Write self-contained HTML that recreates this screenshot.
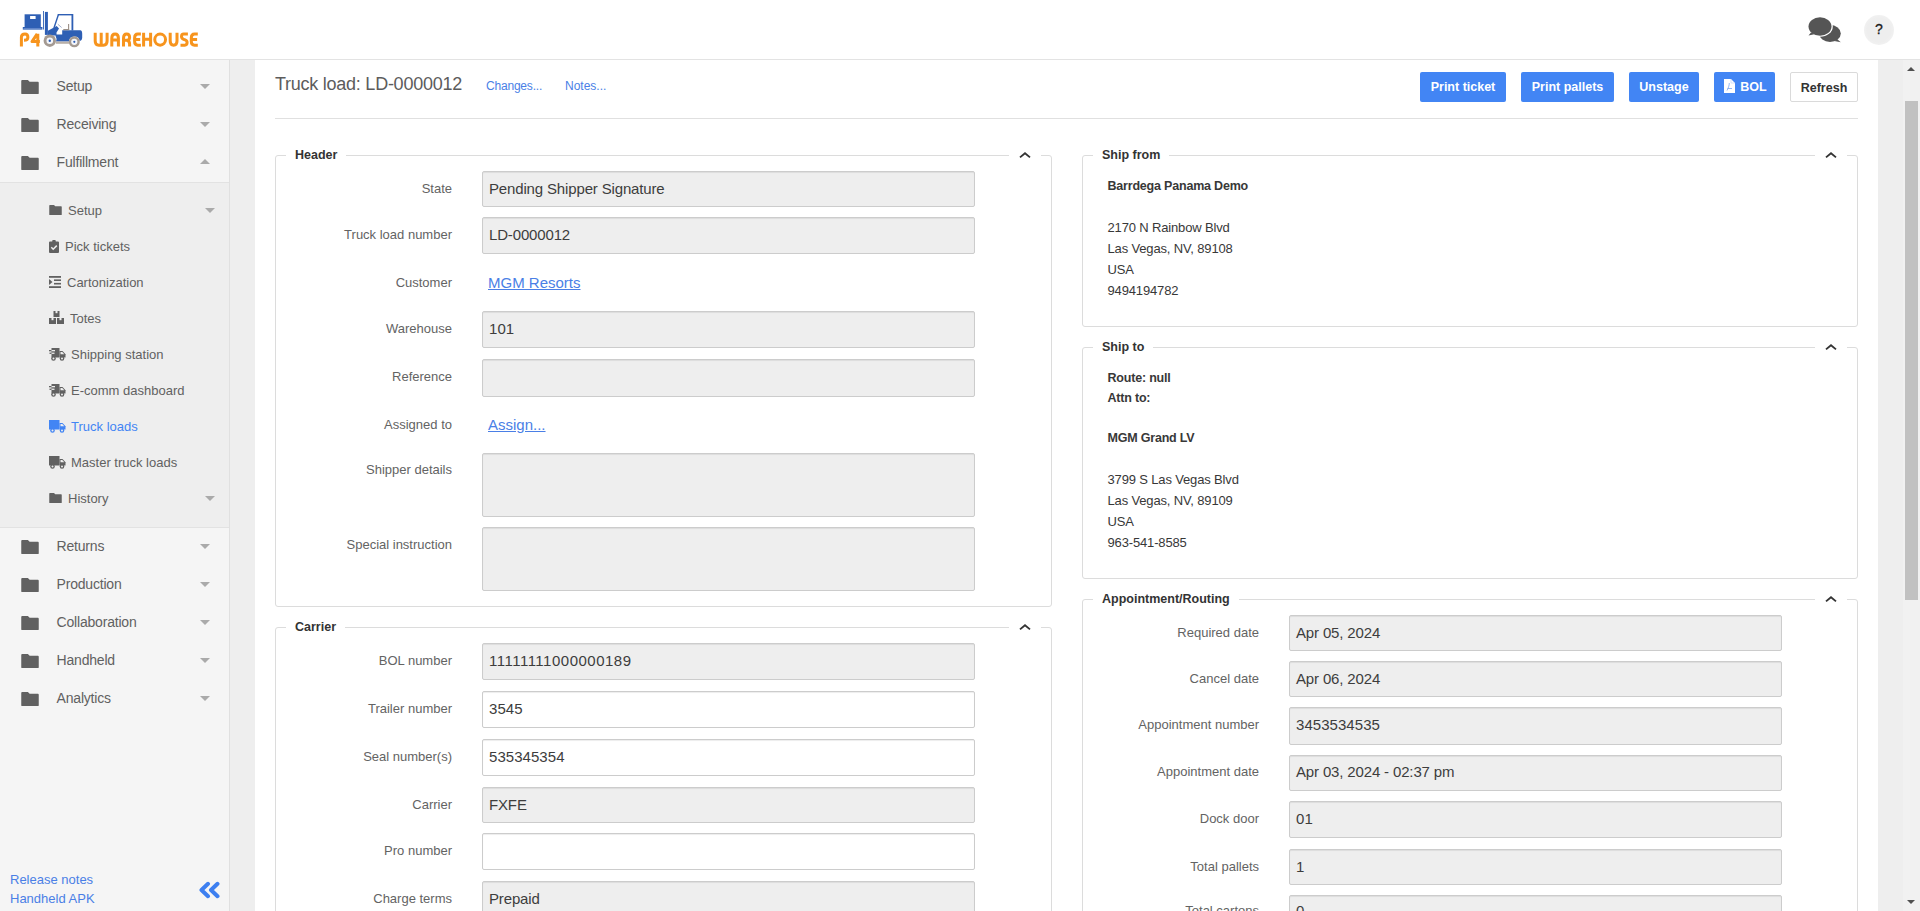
<!DOCTYPE html>
<html><head><meta charset="utf-8">
<style>
*{box-sizing:border-box;margin:0;padding:0}
html,body{width:1920px;height:911px;overflow:hidden;background:#fff;font-family:"Liberation Sans",sans-serif;color:#333}
.abs{position:absolute}
#hdr{position:absolute;left:0;top:0;width:1920px;height:60px;background:#fff;border-bottom:1px solid #e3e3e3}
#side{position:absolute;left:0;top:60px;width:230px;height:851px;background:#f5f5f5;border-right:1px solid #e0e0e0}
#gut{position:absolute;left:230px;top:60px;width:25px;height:851px;background:#eeeeee}
#main{position:absolute;left:255px;top:60px;width:1623px;height:851px;background:#fff}
#gutr{position:absolute;left:1878px;top:60px;width:25px;height:851px;background:#eeeeee}
#sb{position:absolute;left:1903px;top:60px;width:17px;height:851px;background:#f1f1f1}
.mi{position:absolute;left:0;width:229px;height:38px;font-size:14px;color:#616161}
.mi .fo{position:absolute;left:20px;top:0}
.mi .t{position:absolute;left:57px;top:0;line-height:38px}
.caret{position:absolute;width:0;height:0;border-left:5px solid transparent;border-right:5px solid transparent}
.caret.dn{border-top:5px solid #aaa}
.caret.up{border-bottom:5px solid #aaa}
#sub{position:absolute;left:0;top:182px;width:229px;height:346px;background:#eeeeee;border-top:1px solid #e2e2e2;border-bottom:1px solid #e2e2e2}
.si{position:absolute;left:49px;height:20px;font-size:13px;color:#616161;line-height:20px}
.si svg{position:absolute;left:0}
.si .t{position:absolute;white-space:nowrap}
.lnk{color:#4a7fe6}
.btn{position:absolute;top:72px;height:30px;border-radius:2px;background:#4285f4;color:#fff;font-weight:bold;font-size:12.5px;line-height:30px;text-align:center;white-space:nowrap}
.fs{position:absolute;border:1px solid #dcdcdc;border-radius:3px}
.lg{position:absolute;background:#fff;font-weight:bold;font-size:12.5px;color:#333;padding:0 9px;line-height:16px}
.chev{position:absolute;background:#fff;width:32px;height:16px}
.lbl{position:absolute;font-size:13px;color:#636363;text-align:right;white-space:nowrap;line-height:16px}
.inp{position:absolute;background:#eeeeee;border:1px solid #cccccc;border-radius:2px;box-shadow:inset 0 1px 1px rgba(0,0,0,.075)}
.itx{position:absolute;font-size:15px;line-height:17px;color:#3d3d3d;letter-spacing:-0.15px;white-space:nowrap}
.inp.w{background:#fff}
.addr{position:absolute;font-size:13px;color:#383838;line-height:21px;letter-spacing:-0.15px;white-space:nowrap}
.addr.b{font-weight:bold;font-size:12.5px;letter-spacing:-0.2px}
</style></head><body>
<div id="hdr"></div>
<svg class="abs" style="left:0;top:0" width="210" height="58" viewBox="0 0 210 58">
<g fill="#2e5fb4">
<rect x="24.6" y="14.3" width="16.2" height="13"/>
<rect x="22.8" y="27" width="19.6" height="2.6"/>
<rect x="43" y="11" width="0.9" height="18.5"/>
<rect x="44.9" y="11.9" width="3" height="23"/>
<rect x="57.8" y="14" width="15.2" height="1.4"/>
<path d="M57.8 14.2L59.2 14.6L54.6 28.2L53.3 27.8z"/>
<rect x="71.5" y="14" width="1.8" height="16.5"/>
<path d="M47.9 30.8L56.7 25.9L59 28.6L56.5 32.5V35.5H47.9z"/>
<path d="M55.6 34.6H62.2V30.2H80.3Q82 30.2 82.2 33.5V38Q82 40.6 80 41H79.7A5.4 5.4 0 0 0 69 41.5H56A6.2 6.2 0 0 0 55.6 36z"/>
</g>
<rect x="30.1" y="16" width="5.5" height="3" fill="#fff"/>
<rect x="23.5" y="28" width="18" height="0.8" fill="#6d8fd0"/>
<path d="M57.8 24.2L61.6 27.5" stroke="#8a9bbf" stroke-width="0.8"/>
<path d="M68.6 24v6M63.3 29.6h6" stroke="#9a8f86" stroke-width="1.1"/>
<g>
<circle cx="49.8" cy="40.7" r="6.2" fill="#a49a92"/><circle cx="49.8" cy="40.7" r="3.3" fill="#f4f6fb"/><circle cx="49.8" cy="40.7" r="1.2" fill="#2e5fb4"/>
<circle cx="74.3" cy="41.8" r="5.5" fill="#a49a92"/><circle cx="74.3" cy="41.8" r="3.1" fill="#f4f6fb"/><circle cx="74.3" cy="41.8" r="1.1" fill="#2e5fb4"/>
<rect x="56" y="41.6" width="13" height="2.2" fill="#b9b0a8"/>
</g>
<g fill="none" stroke="#f7941d" stroke-width="3" stroke-linejoin="round">
<path d="M21.4 46.6V37.3Q21.4 34 25 34Q27.9 34 27.9 37.3Q27.9 40.3 24 40.3"/>
<path d="M37.2 33.8L32 41.6H39.9M37.8 33.8V46.6"/>
<path d="M95.2 32.7V41Q95.2 45.2 98.8 45.2H103.5Q107.1 45.2 107.1 41V32.7M101.2 32.7V44"/>
<path d="M111.8 46.6V38.2Q111.8 34 115.1 34Q118.4 34 118.4 38.2V46.6M111.8 40H118.4"/>
<path d="M123.5 46.6V38.2Q123.5 34 126.6 34Q129.6 34 129.6 37.2Q129.6 40.2 126.8 40.2H123.5M127 40.2Q129.6 41 129.6 44V46.6"/>
<path d="M140.9 34H137.8Q134.6 34 134.6 38V41.3Q134.6 45.2 137.8 45.2H140.9M134.6 39.6H140.2"/>
<path d="M143.6 32.7V46.6M150.6 32.7V46.6M143.6 39.2H150.6"/>
<ellipse cx="160.15" cy="39.6" rx="5.4" ry="5.55"/>
<path d="M170.2 32.7V41Q170.2 45.2 173.6 45.2Q177 45.2 177 41V32.7"/>
<path d="M187.9 34H183.7Q181.5 34 181.5 36.6Q181.5 38.5 183.6 39.3L185.2 39.9Q187.1 40.6 187.1 42.6Q187.1 45.2 184.8 45.2H180.5"/>
<path d="M197.8 34H194.5Q191.3 34 191.3 38V41.3Q191.3 45.2 194.5 45.2H197.8M191.3 39.6H197.1"/>
</g>
</svg>
<svg class="abs" style="left:1806px;top:15px" width="36" height="29" viewBox="0 0 36 29">
<ellipse cx="24" cy="18.5" rx="10.8" ry="8.5" fill="#555"/>
<path d="M31 24l3.8 3.2-6.5-1.2z" fill="#555"/>
<ellipse cx="14" cy="11.5" rx="12.8" ry="10.3" fill="#fff"/>
<ellipse cx="14" cy="11.5" rx="11.5" ry="9.3" fill="#555"/>
<path d="M5 17.5L2.5 20.5l7-1.5z" fill="#555"/>
</svg>
<div class="abs" style="left:1864px;top:15px;width:30px;height:30px;border-radius:50%;background:radial-gradient(circle,#eeeeee 55%,#f3f3f3 80%,#fbfbfb 100%);font-size:14px;color:#1a1a1a;text-align:center;line-height:28px;-webkit-text-stroke:0.3px #1a1a1a">?</div>
<div id="side"></div>
<div id="sub"></div>
<svg class="abs" style="left:20px;top:80px" width="20" height="14" viewBox="0 0 20 16"><path d="M7.6 0H1C.4 0 0 .4 0 1v14c0 .6.4 1 1 1h18c.6 0 1-.4 1-1V3c0-.6-.4-1-1-1h-9.4z" fill="#616161"/></svg>
<div class="abs" style="left:56.6px;top:77px;font-size:14px;line-height:18px;color:#616161;letter-spacing:-0.2px">Setup</div>
<div class="caret dn" style="left:200px;top:84px"></div>
<svg class="abs" style="left:20px;top:118px" width="20" height="14" viewBox="0 0 20 16"><path d="M7.6 0H1C.4 0 0 .4 0 1v14c0 .6.4 1 1 1h18c.6 0 1-.4 1-1V3c0-.6-.4-1-1-1h-9.4z" fill="#616161"/></svg>
<div class="abs" style="left:56.6px;top:115px;font-size:14px;line-height:18px;color:#616161;letter-spacing:-0.2px">Receiving</div>
<div class="caret dn" style="left:200px;top:122px"></div>
<svg class="abs" style="left:20px;top:156px" width="20" height="14" viewBox="0 0 20 16"><path d="M7.6 0H1C.4 0 0 .4 0 1v14c0 .6.4 1 1 1h18c.6 0 1-.4 1-1V3c0-.6-.4-1-1-1h-9.4z" fill="#616161"/></svg>
<div class="abs" style="left:56.6px;top:153px;font-size:14px;line-height:18px;color:#616161;letter-spacing:-0.2px">Fulfillment</div>
<div class="caret up" style="left:200px;top:159px"></div>
<svg class="abs" style="left:20px;top:540px" width="20" height="14" viewBox="0 0 20 16"><path d="M7.6 0H1C.4 0 0 .4 0 1v14c0 .6.4 1 1 1h18c.6 0 1-.4 1-1V3c0-.6-.4-1-1-1h-9.4z" fill="#616161"/></svg>
<div class="abs" style="left:56.6px;top:537px;font-size:14px;line-height:18px;color:#616161;letter-spacing:-0.2px">Returns</div>
<div class="caret dn" style="left:200px;top:544px"></div>
<svg class="abs" style="left:20px;top:578px" width="20" height="14" viewBox="0 0 20 16"><path d="M7.6 0H1C.4 0 0 .4 0 1v14c0 .6.4 1 1 1h18c.6 0 1-.4 1-1V3c0-.6-.4-1-1-1h-9.4z" fill="#616161"/></svg>
<div class="abs" style="left:56.6px;top:575px;font-size:14px;line-height:18px;color:#616161;letter-spacing:-0.2px">Production</div>
<div class="caret dn" style="left:200px;top:582px"></div>
<svg class="abs" style="left:20px;top:616px" width="20" height="14" viewBox="0 0 20 16"><path d="M7.6 0H1C.4 0 0 .4 0 1v14c0 .6.4 1 1 1h18c.6 0 1-.4 1-1V3c0-.6-.4-1-1-1h-9.4z" fill="#616161"/></svg>
<div class="abs" style="left:56.6px;top:613px;font-size:14px;line-height:18px;color:#616161;letter-spacing:-0.2px">Collaboration</div>
<div class="caret dn" style="left:200px;top:620px"></div>
<svg class="abs" style="left:20px;top:654px" width="20" height="14" viewBox="0 0 20 16"><path d="M7.6 0H1C.4 0 0 .4 0 1v14c0 .6.4 1 1 1h18c.6 0 1-.4 1-1V3c0-.6-.4-1-1-1h-9.4z" fill="#616161"/></svg>
<div class="abs" style="left:56.6px;top:651px;font-size:14px;line-height:18px;color:#616161;letter-spacing:-0.2px">Handheld</div>
<div class="caret dn" style="left:200px;top:658px"></div>
<svg class="abs" style="left:20px;top:692px" width="20" height="14" viewBox="0 0 20 16"><path d="M7.6 0H1C.4 0 0 .4 0 1v14c0 .6.4 1 1 1h18c.6 0 1-.4 1-1V3c0-.6-.4-1-1-1h-9.4z" fill="#616161"/></svg>
<div class="abs" style="left:56.6px;top:689px;font-size:14px;line-height:18px;color:#616161;letter-spacing:-0.2px">Analytics</div>
<div class="caret dn" style="left:200px;top:696px"></div>
<svg class="abs" style="left:49px;top:205px" width="13" height="10" viewBox="0 0 20 16"><path d="M7.6 0H1C.4 0 0 .4 0 1v14c0 .6.4 1 1 1h18c.6 0 1-.4 1-1V3c0-.6-.4-1-1-1h-9.4z" fill="#616161"/></svg>
<div class="abs" style="left:68px;top:203px;font-size:13px;line-height:16px;color:#616161;white-space:nowrap">Setup</div>
<div class="caret dn" style="left:205px;top:208px"></div>
<svg class="abs" style="left:49px;top:240px" width="10" height="13" viewBox="0 0 10 13"><path d="M1 1.5h2.2a1.8 1.8 0 0 1 3.6 0H9a1 1 0 0 1 1 1V12a1 1 0 0 1-1 1H1a1 1 0 0 1-1-1V2.5a1 1 0 0 1 1-1z" fill="#616161"/><path d="M2.3 7.3l1.9 1.9 3.6-3.6" stroke="#eee" stroke-width="1.5" fill="none"/></svg>
<div class="abs" style="left:65px;top:239px;font-size:13px;line-height:16px;color:#616161;white-space:nowrap">Pick tickets</div>
<svg class="abs" style="left:49px;top:276px" width="12" height="12" viewBox="0 0 12 12"><g fill="#616161"><rect x="0" y="0" width="12" height="1.8"/><rect x="0" y="10.2" width="12" height="1.8"/><rect x="5" y="3.4" width="7" height="1.6"/><rect x="5" y="6.9" width="7" height="1.6"/><path d="M0 3l3.5 3L0 9z"/></g></svg>
<div class="abs" style="left:67px;top:275px;font-size:13px;line-height:16px;color:#616161;white-space:nowrap">Cartonization</div>
<svg class="abs" style="left:49px;top:311px" width="15" height="13" viewBox="0 0 15 13"><g fill="#616161"><rect x="4.5" y="0" width="6" height="6"/><rect x="0" y="7" width="7" height="6"/><rect x="8" y="7" width="7" height="6"/></g><g fill="#eee"><rect x="6.5" y="0" width="2" height="2.2"/><rect x="2.5" y="7" width="2" height="2.2"/><rect x="10.5" y="7" width="2" height="2.2"/></g></svg>
<div class="abs" style="left:70px;top:311px;font-size:13px;line-height:16px;color:#616161;white-space:nowrap">Totes</div>
<svg class="abs" style="left:49px;top:348px" width="17" height="13" viewBox="0 0 17 13"><g fill="#616161"><path d="M2.5 0h8v9.5h-8z"/><path d="M10.5 3h3l3 3.2v3.3h-6z"/><circle cx="4.5" cy="10.5" r="2.3"/><circle cx="13" cy="10.5" r="2.3"/><rect x="0" y="2" width="3" height="1.3"/><rect x="0.5" y="4.6" width="2.5" height="1.3"/></g><g fill="#eee"><circle cx="4.5" cy="10.5" r="1"/><circle cx="13" cy="10.5" r="1"/><rect x="2.5" y="2" width="3.5" height="1.3"/><rect x="2.5" y="4.6" width="3" height="1.3"/><path d="M11.5 4h1.8l2 2.2h-3.8z"/></g></svg>
<div class="abs" style="left:71px;top:347px;font-size:13px;line-height:16px;color:#616161;white-space:nowrap">Shipping station</div>
<svg class="abs" style="left:49px;top:384px" width="17" height="13" viewBox="0 0 17 13"><g fill="#616161"><path d="M2.5 0h8v9.5h-8z"/><path d="M10.5 3h3l3 3.2v3.3h-6z"/><circle cx="4.5" cy="10.5" r="2.3"/><circle cx="13" cy="10.5" r="2.3"/><rect x="0" y="2" width="3" height="1.3"/><rect x="0.5" y="4.6" width="2.5" height="1.3"/></g><g fill="#eee"><circle cx="4.5" cy="10.5" r="1"/><circle cx="13" cy="10.5" r="1"/><rect x="2.5" y="2" width="3.5" height="1.3"/><rect x="2.5" y="4.6" width="3" height="1.3"/><path d="M11.5 4h1.8l2 2.2h-3.8z"/></g></svg>
<div class="abs" style="left:71px;top:383px;font-size:13px;line-height:16px;color:#616161;white-space:nowrap">E-comm dashboard</div>
<svg class="abs" style="left:49px;top:420px" width="17" height="13" viewBox="0 0 17 13"><g fill="#4285f4"><path d="M0 0h10.5v9.5H0z"/><path d="M10.5 3h3l3 3.2v3.3h-6z"/><circle cx="3.5" cy="10.5" r="2.3"/><circle cx="13" cy="10.5" r="2.3"/></g><g fill="#eee"><circle cx="3.5" cy="10.5" r="1"/><circle cx="13" cy="10.5" r="1"/><path d="M11.5 4h1.8l2 2.2h-3.8z"/></g></svg>
<div class="abs" style="left:71px;top:419px;font-size:13px;line-height:16px;color:#4285f4;white-space:nowrap">Truck loads</div>
<svg class="abs" style="left:49px;top:456px" width="17" height="13" viewBox="0 0 17 13"><g fill="#616161"><path d="M0 0h10.5v9.5H0z"/><path d="M10.5 3h3l3 3.2v3.3h-6z"/><circle cx="3.5" cy="10.5" r="2.3"/><circle cx="13" cy="10.5" r="2.3"/></g><g fill="#eee"><circle cx="3.5" cy="10.5" r="1"/><circle cx="13" cy="10.5" r="1"/><path d="M11.5 4h1.8l2 2.2h-3.8z"/></g></svg>
<div class="abs" style="left:71px;top:455px;font-size:13px;line-height:16px;color:#616161;white-space:nowrap">Master truck loads</div>
<svg class="abs" style="left:49px;top:493px" width="13" height="10" viewBox="0 0 20 16"><path d="M7.6 0H1C.4 0 0 .4 0 1v14c0 .6.4 1 1 1h18c.6 0 1-.4 1-1V3c0-.6-.4-1-1-1h-9.4z" fill="#616161"/></svg>
<div class="abs" style="left:68px;top:491px;font-size:13px;line-height:16px;color:#616161;white-space:nowrap">History</div>
<div class="caret dn" style="left:205px;top:496px"></div>
<div class="abs lnk" style="left:10px;top:872px;font-size:13px;line-height:16px">Release notes</div>
<div class="abs lnk" style="left:10px;top:891px;font-size:13px;line-height:16px">Handheld APK</div>
<svg class="abs" style="left:198px;top:881px" width="23" height="18" viewBox="0 0 23 18"><path d="M10 2.8L3.5 9L10 15.2M19.5 2.8L13 9L19.5 15.2" stroke="#3d7ff0" stroke-width="4" stroke-linecap="round" stroke-linejoin="round" fill="none"/></svg>
<div id="gut"></div><div id="main"></div><div id="gutr"></div>
<div id="sb"></div>
<div class="abs" style="left:1907px;top:67px;width:0;height:0;border-left:4px solid transparent;border-right:4px solid transparent;border-bottom:4px solid #505050"></div>
<div class="abs" style="left:1905px;top:101px;width:13px;height:499px;background:#c1c1c1"></div>
<div class="abs" style="left:1907px;top:900px;width:0;height:0;border-left:4px solid transparent;border-right:4px solid transparent;border-top:4px solid #505050"></div>
<div class="abs" style="left:275px;top:74px;font-size:18px;line-height:21px;color:#5c5c5c;letter-spacing:-0.25px;white-space:nowrap">Truck load: LD-0000012</div>
<div class="abs lnk" style="left:486px;top:79px;font-size:12px;line-height:14px;letter-spacing:-0.2px">Changes...</div>
<div class="abs lnk" style="left:565px;top:79px;font-size:12px;line-height:14px">Notes...</div>
<div class="btn" style="left:1420px;width:86px">Print ticket</div>
<div class="btn" style="left:1521px;width:93px">Print pallets</div>
<div class="btn" style="left:1629px;width:70px">Unstage</div>
<div class="btn" style="left:1714px;width:61px"><svg style="vertical-align:-2px;margin-right:5px;position:relative;top:0px;margin-left:2px" width="11" height="14" viewBox="0 0 11 14"><path d="M0 0h7L11 4V14H0z" fill="#fff"/><path d="M7 0V4H11" fill="none" stroke="#b8cff7" stroke-width=".6"/><path d="M3 11.5c1.2-2.2 2.3-5 2.3-7.5M3.5 9.5h4.5" stroke="#7aa5f0" stroke-width=".8" fill="none"/></svg>BOL</div>
<div class="btn" style="left:1790px;width:68px;background:#fff;color:#333;border:1px solid #dadada">Refresh</div>
<div class="abs" style="left:275px;top:118px;width:1583px;height:1px;background:#e0e0e0"></div>
<div class="fs" style="left:275px;top:155px;width:777px;height:452px"></div>
<div class="lg" style="left:286px;top:147px">Header</div>
<div class="chev" style="left:1009px;top:147px"><svg style="position:absolute;left:10px;top:4px" width="12" height="9" viewBox="0 0 12 9"><path d="M1 6.4L6 2.2L11 6.4" stroke="#333" stroke-width="1.8" fill="none"/></svg></div>
<div class="lbl" style="right:1468px;top:181px">State</div>
<div class="inp" style="left:482px;top:171px;width:493px;height:36px"></div>
<div class="itx" style="left:489px;top:180px">Pending Shipper Signature</div>
<div class="lbl" style="right:1468px;top:227px">Truck load number</div>
<div class="inp" style="left:482px;top:217px;width:493px;height:37px"></div>
<div class="itx" style="left:489px;top:226px">LD-0000012</div>
<div class="lbl" style="right:1468px;top:275px">Customer</div>
<div class="abs lnk" style="left:488px;top:274px;font-size:15px;line-height:17px;text-decoration:underline">MGM Resorts</div>
<div class="lbl" style="right:1468px;top:321px">Warehouse</div>
<div class="inp" style="left:482px;top:311px;width:493px;height:37px"></div>
<div class="itx" style="left:489px;top:320px;letter-spacing:0.05px">101</div>
<div class="lbl" style="right:1468px;top:369px">Reference</div>
<div class="inp" style="left:482px;top:359px;width:493px;height:38px"></div>
<div class="lbl" style="right:1468px;top:417px">Assigned to</div>
<div class="abs lnk" style="left:488px;top:416px;font-size:15px;line-height:17px;text-decoration:underline">Assign...</div>
<div class="lbl" style="right:1468px;top:462px">Shipper details</div>
<div class="inp" style="left:482px;top:453px;width:493px;height:64px"></div>
<div class="lbl" style="right:1468px;top:537px">Special instruction</div>
<div class="inp" style="left:482px;top:527px;width:493px;height:64px"></div>
<div class="fs" style="left:275px;top:627px;width:777px;height:334px"></div>
<div class="lg" style="left:286px;top:619px">Carrier</div>
<div class="chev" style="left:1009px;top:619px"><svg style="position:absolute;left:10px;top:4px" width="12" height="9" viewBox="0 0 12 9"><path d="M1 6.4L6 2.2L11 6.4" stroke="#333" stroke-width="1.8" fill="none"/></svg></div>
<div class="lbl" style="right:1468px;top:653px">BOL number</div>
<div class="inp" style="left:482px;top:643px;width:493px;height:37px"></div>
<div class="itx" style="left:489px;top:652px;letter-spacing:0.05px"><span style="letter-spacing:0.5px">11111111000000189</span></div>
<div class="lbl" style="right:1468px;top:701px">Trailer number</div>
<div class="inp w" style="left:482px;top:691px;width:493px;height:37px"></div>
<div class="itx" style="left:489px;top:700px;letter-spacing:0.05px">3545</div>
<div class="lbl" style="right:1468px;top:749px">Seal number(s)</div>
<div class="inp w" style="left:482px;top:739px;width:493px;height:37px"></div>
<div class="itx" style="left:489px;top:748px;letter-spacing:0.05px">535345354</div>
<div class="lbl" style="right:1468px;top:797px">Carrier</div>
<div class="inp" style="left:482px;top:787px;width:493px;height:36px"></div>
<div class="itx" style="left:489px;top:796px">FXFE</div>
<div class="lbl" style="right:1468px;top:843px">Pro number</div>
<div class="inp w" style="left:482px;top:833px;width:493px;height:37px"></div>
<div class="lbl" style="right:1468px;top:891px">Charge terms</div>
<div class="inp" style="left:482px;top:881px;width:493px;height:37px"></div>
<div class="itx" style="left:489px;top:890px">Prepaid</div>
<div class="fs" style="left:1082px;top:155px;width:776px;height:172px"></div>
<div class="lg" style="left:1093px;top:147px">Ship from</div>
<div class="chev" style="left:1815px;top:147px"><svg style="position:absolute;left:10px;top:4px" width="12" height="9" viewBox="0 0 12 9"><path d="M1 6.4L6 2.2L11 6.4" stroke="#333" stroke-width="1.8" fill="none"/></svg></div>
<div class="addr b" style="left:1107.5px;top:176px">Barrdega Panama Demo</div>
<div class="addr" style="left:1107.5px;top:217px">2170 N Rainbow Blvd<br>Las Vegas, NV, 89108<br>USA<br>9494194782</div>
<div class="fs" style="left:1082px;top:347px;width:776px;height:232px"></div>
<div class="lg" style="left:1093px;top:339px">Ship to</div>
<div class="chev" style="left:1815px;top:339px"><svg style="position:absolute;left:10px;top:4px" width="12" height="9" viewBox="0 0 12 9"><path d="M1 6.4L6 2.2L11 6.4" stroke="#333" stroke-width="1.8" fill="none"/></svg></div>
<div class="addr b" style="left:1107.5px;top:368px;line-height:20px">Route: null<br>Attn to:<br><br>MGM Grand LV</div>
<div class="addr" style="left:1107.5px;top:469px">3799 S Las Vegas Blvd<br>Las Vegas, NV, 89109<br>USA<br>963-541-8585</div>
<div class="fs" style="left:1082px;top:599px;width:776px;height:362px"></div>
<div class="lg" style="left:1093px;top:591px">Appointment/Routing</div>
<div class="chev" style="left:1815px;top:591px"><svg style="position:absolute;left:10px;top:4px" width="12" height="9" viewBox="0 0 12 9"><path d="M1 6.4L6 2.2L11 6.4" stroke="#333" stroke-width="1.8" fill="none"/></svg></div>
<div class="lbl" style="right:661px;top:625px">Required date</div>
<div class="inp" style="left:1289px;top:615px;width:493px;height:36px"></div>
<div class="itx" style="left:1296px;top:624px">Apr 05, 2024</div>
<div class="lbl" style="right:661px;top:671px">Cancel date</div>
<div class="inp" style="left:1289px;top:661px;width:493px;height:36px"></div>
<div class="itx" style="left:1296px;top:670px">Apr 06, 2024</div>
<div class="lbl" style="right:661px;top:717px">Appointment number</div>
<div class="inp" style="left:1289px;top:707px;width:493px;height:38px"></div>
<div class="itx" style="left:1296px;top:716px;letter-spacing:0.05px">3453534535</div>
<div class="lbl" style="right:661px;top:764px">Appointment date</div>
<div class="inp" style="left:1289px;top:755px;width:493px;height:36px"></div>
<div class="itx" style="left:1296px;top:763px">Apr 03, 2024 - 02:37 pm</div>
<div class="lbl" style="right:661px;top:811px">Dock door</div>
<div class="inp" style="left:1289px;top:801px;width:493px;height:37px"></div>
<div class="itx" style="left:1296px;top:810px;letter-spacing:0.05px">01</div>
<div class="lbl" style="right:661px;top:859px">Total pallets</div>
<div class="inp" style="left:1289px;top:849px;width:493px;height:36px"></div>
<div class="itx" style="left:1296px;top:858px;letter-spacing:0.05px">1</div>
<div class="lbl" style="right:661px;top:903px">Total cartons</div>
<div class="inp" style="left:1289px;top:895px;width:493px;height:37px"></div>
<div class="itx" style="left:1296px;top:902px;letter-spacing:0.05px">0</div>
</body></html>
